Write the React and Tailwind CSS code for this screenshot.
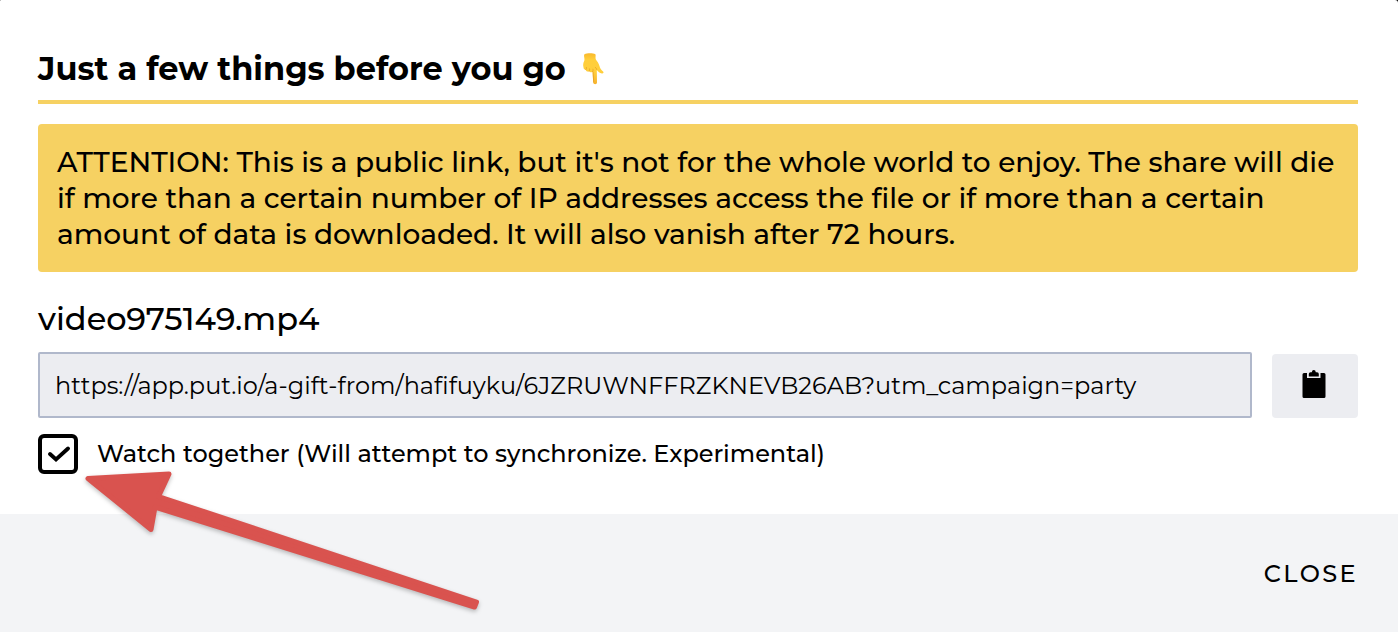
import { useState } from "react";

const SHARE_URL =
  "https://app.put.io/a-gift-from/hafifuyku/6JZRUWNFFRZKNEVB26AB?utm_campaign=party";

function PointingDown() {
  return (
    <svg
      className="h-8 w-6 shrink-0"
      viewBox="0 0 24 32"
      role="img"
      aria-label="Pointing down"
    >
      <defs>
        <linearGradient id="skin" x1="0" y1="0" x2="0" y2="1">
          <stop offset="0" stopColor="#f9b92c" />
          <stop offset="0.2" stopColor="#ffce3a" />
          <stop offset="0.6" stopColor="#ffcf3c" />
          <stop offset="1" stopColor="#f7b22d" />
        </linearGradient>
      </defs>
      <path
        d="M2.500 1.200C5 0 11 0 13.300 1.200c.8.500-.2 3.800.6 5.200 1.200 1.900 2.800 3.600 3.500 6.300.6 2.300 1.700 4.200 3.700 5.800 1.100 1 .1 2.200-1.200 2-2.200-.3-3.700-1.900-5.100-3.500L15 29.600c0 2.300-3.600 2.300-3.800 0L10.500 18.700c-1.300.9-2.800.7-3.500-.4-1.400.4-2.800-.1-3.200-1.400-1.500-.2-2.400-1.100-2.300-2.600-.7-2.100-.3-4.700.8-6.500C3 5.700 1.300 2.200 2.500 1.200z"
        fill="url(#skin)"
      />
      <path
        d="M3.800 16.700c.6-.6.800-1.400.600-2.200M7 18.200c.600-.7.800-1.500.6-2.300M10.500 18.600c.6-.8.7-1.600.5-2.400M11.700 29l-.6-10"
        fill="none"
        stroke="#e39a22"
        strokeWidth="0.7"
        strokeLinecap="round"
      />
      <path
        d="M14.800 16.800c-.3-1.200-.8-2-1.700-2.700"
        fill="none"
        stroke="#e59b20"
        strokeWidth="0.7"
      />
    </svg>
  );
}

function ClipboardIcon() {
  return (
    <svg className="h-7 w-6" viewBox="0 0 24 28" aria-hidden="true">
      <path
        d="M2 3H5V8H18.500V3H22Q23.500 3 23.500 4.500V26.500Q23.500 28 22 28H2Q.5 28 .5 26.500V4.500Q.5 3 2 3z"
        fill="#000"
      />
      <path
        d="M6.800 6.500V4Q6.800 2.200 8.500 2.200H9.800Q10 0 11.800 0T13.800 2.200H15Q16.800 2.200 16.800 4V6.500z"
        fill="#000"
      />
    </svg>
  );
}

function Arrow() {
  return (
    <svg
      className="pointer-events-none absolute top-[468px] left-[80px] h-[150px] w-[410px] drop-shadow-[0_2px_2px_rgba(0,0,0,0.25)]"
      viewBox="80 468 410 150"
      aria-hidden="true"
    >
      <path
        d="M88 478.500L169 474L158.500 496.500L476.500 602L474.500 607L155 507L151 529.500z"
        fill="#d9534f"
        stroke="#d9534f"
        strokeWidth="5"
        strokeLinejoin="round"
      />
    </svg>
  );
}

export default function App() {
  const [together, setTogether] = useState(true);

  return (
    <div className="min-h-screen bg-black font-['Montserrat','Inter',sans-serif] text-black">
      <main className="relative flex min-h-screen flex-col overflow-hidden rounded-tl-[1px] rounded-tr-[3px] bg-white">
        <section className="pt-[46px] pr-10 pb-10 pl-[38px]">
          <h1 className="flex items-center gap-4 border-b-4 border-[#f6d162] pb-2 text-[32px] leading-[46px] font-bold">
            Just a few things before you go
            <PointingDown />
          </h1>
          <p className="mt-5 rounded-[4px] bg-[#f6d162] px-[19px] py-5 text-[28px] leading-9 font-medium">
            ATTENTION: This is a public link, but it's not for the whole world
            to enjoy. The share will die if more than a certain number of IP
            addresses access the file or if more than a certain amount of data
            is downloaded. It will also vanish after 72 hours.
          </p>
          <label
            htmlFor="share-link"
            className="mt-6 block text-[32px] leading-[46px] font-medium"
          >
            video975149.mp4
          </label>
          <div className="mt-[10px] flex items-end gap-5">
            <input
              id="share-link"
              type="text"
              readOnly
              value={SHARE_URL}
              className="h-[66px] min-w-0 flex-1 rounded-[2px] border-2 border-[#b0b8cb] bg-[#ecedf1] px-[15px] text-[24px] outline-none"
            />
            <button
              type="button"
              aria-label="Copy link"
              className="flex h-16 w-[86px] shrink-0 items-center justify-center rounded-[4px] bg-[#ecedf1] pr-0.5 pb-1"
            >
              <ClipboardIcon />
            </button>
          </div>
          <label className="mt-4 flex items-center gap-[19px] text-[24px] leading-10 font-medium">
            <span className="relative grid size-10 shrink-0 place-items-center">
              <input
                type="checkbox"
                checked={together}
                onChange={(e) => setTogether(e.target.checked)}
                className="absolute inset-0 size-10 appearance-none rounded-[6px] border-4 border-black bg-white"
              />
              {together && (
                <svg
                  className="pointer-events-none relative size-6"
                  viewBox="0 0 24 24"
                  fill="none"
                  stroke="#000"
                  strokeWidth="3.8"
                  strokeLinecap="round"
                  aria-hidden="true"
                >
                  <path d="M4 12L10 17.500L22 6.500" />
                </svg>
              )}
            </span>
            Watch together (Will attempt to synchronize. Experimental)
          </label>
        </section>
        <footer className="flex flex-1 items-center justify-end bg-[#f3f4f6] px-10 pt-[42px] pb-10">
          <button
            type="button"
            className="text-[24px] leading-9 font-medium tracking-widest"
          >
            CLOSE
          </button>
        </footer>
        <Arrow />
      </main>
    </div>
  );
}
